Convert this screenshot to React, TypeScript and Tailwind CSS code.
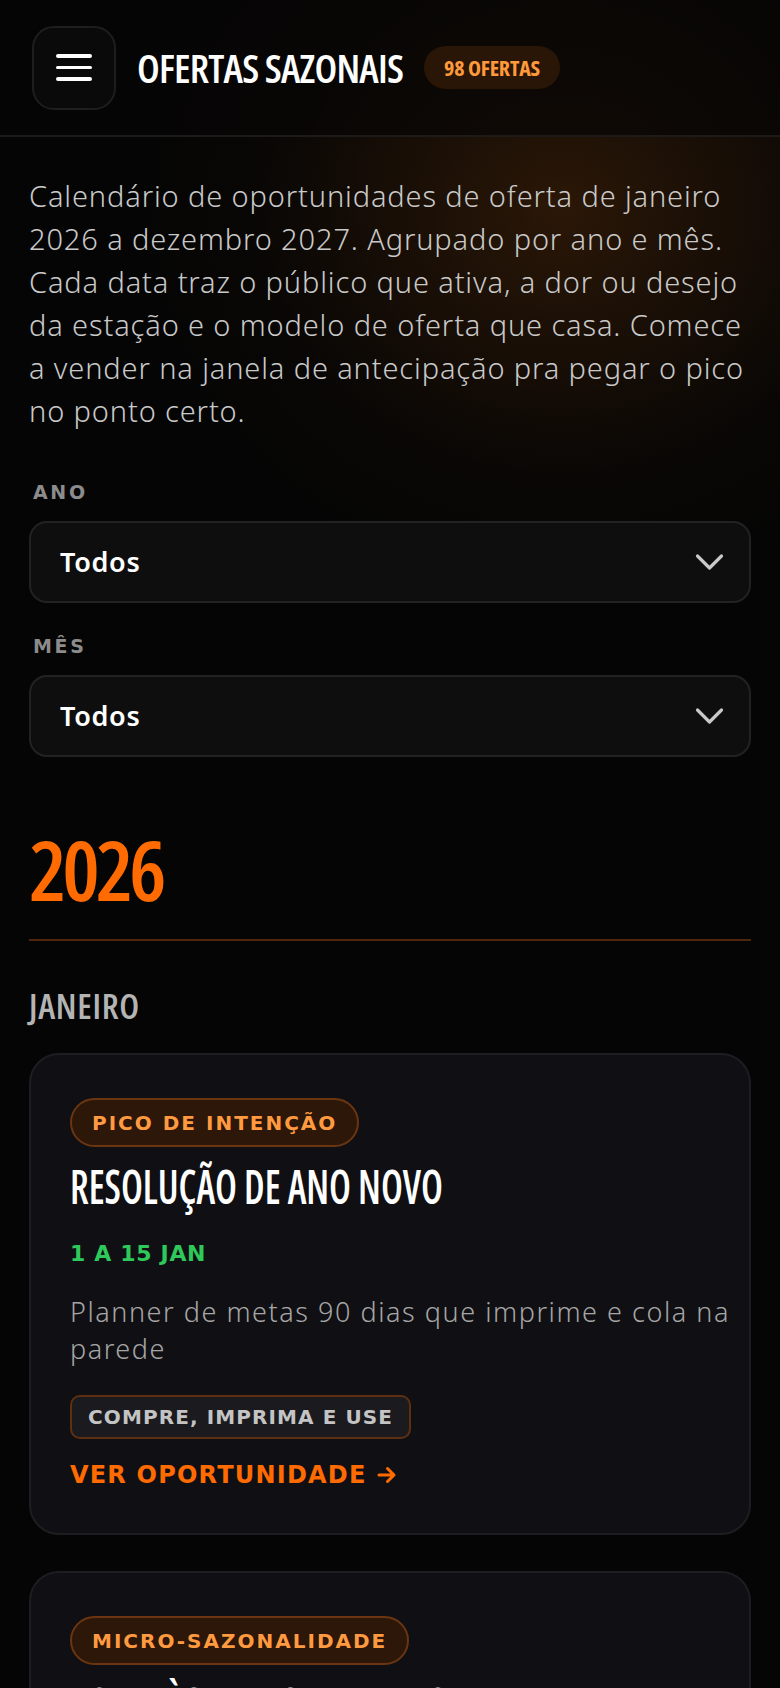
import React from "react";

function Chevron() {
  return (
    <svg width="29" height="19" viewBox="0 0 29 19" fill="none" className="shrink-0">
      <polyline points="2.5,3 14.5,15 26.5,3" stroke="#c9c9c9" strokeWidth="3.2" strokeLinecap="round" strokeLinejoin="round" />
    </svg>
  );
}

function Select({ label, first }: { label: string; first?: boolean }) {
  return (
    <div className={first ? "mt-[46px]" : "mt-[29px]"}>
      <div className="pl-[4px] h-[28px] leading-[28px] font-['DejaVu_Sans',sans-serif] font-bold text-[19px] tracking-[0.14em] text-[#8c8c8c]">
        {label}
      </div>
      <div className="mt-[15px] h-[82px] rounded-[18px] border-2 border-[#222222] bg-[#0f0f0f]/90 flex items-center justify-between pl-[29px] pr-[25px]">
        <span className="font-['Noto_Sans',sans-serif] font-semibold text-[27px] tracking-[0.025em] text-white">Todos</span>
        <Chevron />
      </div>
    </div>
  );
}

function Arrow() {
  return (
    <svg width="20" height="18" viewBox="0 0 20 18" fill="none" className="inline-block ml-[10px]">
      <path d="M2 9 H17 M10.5 2.5 L17 9 L10.5 15.5" stroke="#ff6b00" strokeWidth="3" strokeLinecap="round" strokeLinejoin="round" />
    </svg>
  );
}

function Card({
  badge,
  title,
  date,
  desc,
  tag,
  last,
}: {
  badge: string;
  title: string;
  date?: string;
  desc?: React.ReactNode;
  tag?: string;
  last?: boolean;
}) {
  return (
    <div className={`rounded-[30px] border-2 border-[#1d1d22] bg-[#101014] pl-[39px] pr-[18px] pt-[43px] ${last ? "" : "pb-[43px]"}`}>
      <div className="inline-flex h-[49px] items-center rounded-full border-2 border-[#6a3510] bg-[#2c1708] px-[20px] font-['DejaVu_Sans',sans-serif] font-bold text-[20px] tracking-[0.1em] text-[#ff9a40]">
        {badge}
      </div>
      <div className="mt-[13px] h-[53px] leading-[53px] whitespace-nowrap">
        <span className="inline-block origin-left scale-x-[0.82] font-['Open_Sans',sans-serif] font-semibold [font-stretch:75%] text-[47px] text-white">
          {title}
        </span>
      </div>
      {date && (
        <>
          <div className="mt-[26px] h-[30px] leading-[30px] font-['DejaVu_Sans',sans-serif] font-bold text-[22px] tracking-[0.03em] text-[#2fc95b]">
            {date}
          </div>
          <div className="mt-[24px] leading-[37px] font-['Noto_Sans',sans-serif] font-light text-[27px] tracking-[0.057em] text-[#a6a6a6] whitespace-nowrap">
            {desc}
          </div>
          <div className="mt-[28px] inline-flex h-[44px] items-center rounded-[10px] border-2 border-[#5e2f10] bg-[#1a1a1f] px-[16px] font-['DejaVu_Sans',sans-serif] font-bold text-[20px] tracking-[0.055em] text-[#c4c4c4]">
            {tag}
          </div>
          <div className="mt-[21px] h-[30px] leading-[30px] flex items-center font-['DejaVu_Sans',sans-serif] font-bold text-[24px] tracking-[0.05em] text-[#ff6b00]">
            VER OPORTUNIDADE
            <Arrow />
          </div>
        </>
      )}
    </div>
  );
}

export default function App() {
  return (
    <div className="min-h-[1688px] bg-[#050505] bg-[radial-gradient(ellipse_70%_28%_at_72%_12%,rgba(140,70,12,0.28),rgba(60,30,5,0.08)_55%,transparent_80%)] overflow-hidden">
      <header className="h-[137px] border-b-2 border-[#1d1b1a] bg-[#070605]/70 flex items-center pl-[32px]">
        <div className="w-[84px] h-[84px] rounded-[22px] border-2 border-[#1e1e1e] bg-[#0a0a0a] flex flex-col items-center justify-center gap-[8px]">
          <span className="block w-[36px] h-[3.5px] rounded-full bg-white" />
          <span className="block w-[36px] h-[3.5px] rounded-full bg-white" />
          <span className="block w-[36px] h-[3.5px] rounded-full bg-white" />
        </div>
        <h1 className="ml-[21px] font-['Open_Sans',sans-serif] font-semibold [font-stretch:75%] text-[40px] tracking-[-0.02em] text-white leading-none whitespace-nowrap">
          OFERTAS SAZONAIS
        </h1>
        <div className="ml-[21px] h-[43px] px-[20px] rounded-full bg-[#2a1606] flex items-center font-['Open_Sans',sans-serif] font-bold [font-stretch:75%] text-[22px] tracking-[-0.01em] text-[#ff9a3c] whitespace-nowrap">
          98 OFERTAS
        </div>
      </header>

      <main className="px-[29px]">
        <p className="pt-[37px] font-['Noto_Sans',sans-serif] font-light text-[29px] leading-[43px] tracking-[0.03em] text-[#c9c9c9] whitespace-nowrap">
          Calendário de oportunidades de oferta de janeiro
          <br />
          2026 a dezembro 2027. Agrupado por ano e mês.
          <br />
          Cada data traz o público que ativa, a dor ou desejo
          <br />
          da estação e o modelo de oferta que casa. Comece
          <br />
          a vender na janela de antecipação pra pegar o pico
          <br />
          no ponto certo.
        </p>

        <Select label="ANO" first />
        <Select label="MÊS" />

        <h2 className="mt-[69px] h-[85px] leading-[85px] font-['Open_Sans',sans-serif] font-semibold [font-stretch:75%] text-[84px] tracking-[-0.05em] text-[#ff6b00]">
          2026
        </h2>
        <div className="mt-[28px] h-[2px] bg-[#4f260b]" />

        <h3 className="mt-[47px] h-[35px] leading-[35px] font-['Open_Sans',sans-serif] font-semibold [font-stretch:75%] text-[35px] tracking-[0.02em] text-[#b4b4b4]">
          JANEIRO
        </h3>

        <div className="mt-[30px] flex flex-col gap-[36px]">
          <Card
            badge="PICO DE INTENÇÃO"
            title="RESOLUÇÃO DE ANO NOVO"
            date="1 A 15 JAN"
            desc={
              <>
                Planner de metas 90 dias que imprime e cola na
                <br />
                parede
              </>
            }
            tag="COMPRE, IMPRIMA E USE"
          />
          <Card badge="MICRO-SAZONALIDADE" title="VOLTA ÀS AULAS: KIT DE ROTINA" last />
        </div>
      </main>
    </div>
  );
}
